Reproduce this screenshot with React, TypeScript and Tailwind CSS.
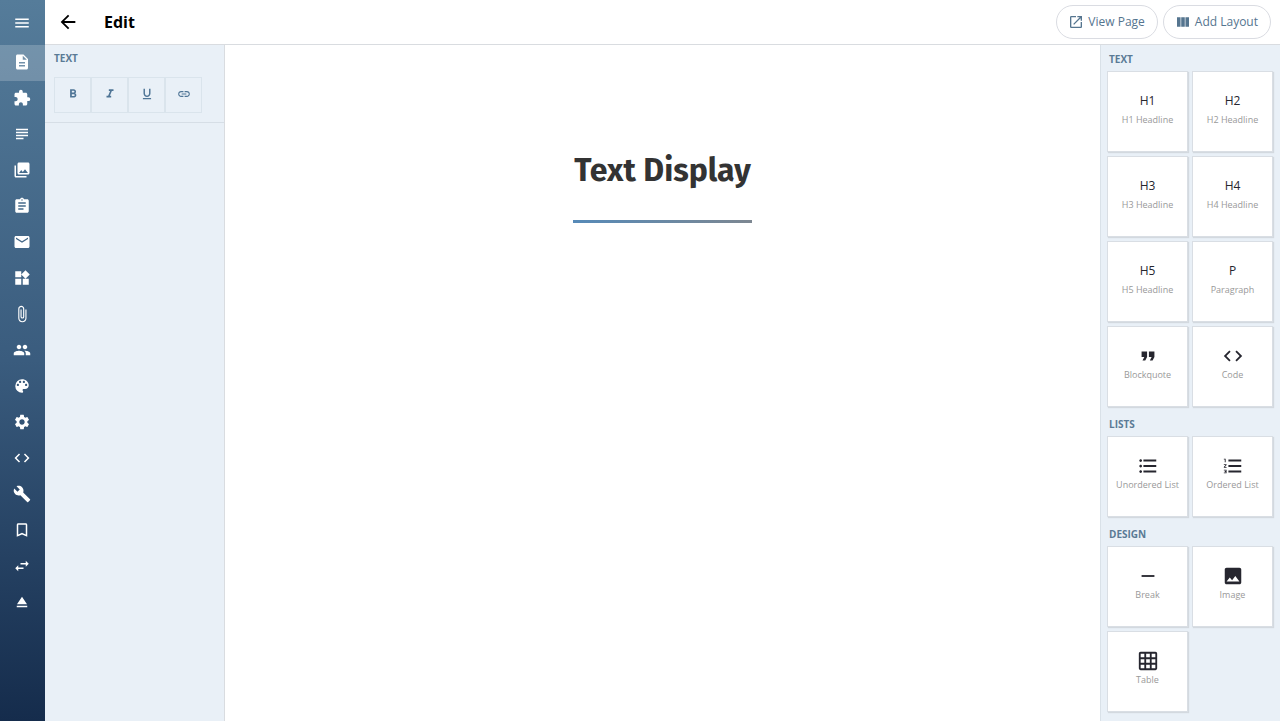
import type { ReactNode } from 'react';
import type { IconType } from 'react-icons';
import {
  MdArrowBack,
  MdAssignment,
  MdAttachFile,
  MdBookmarkBorder,
  MdBuild,
  MdCode,
  MdColorLens,
  MdDescription,
  MdEject,
  MdEmail,
  MdExtension,
  MdFormatBold,
  MdFormatItalic,
  MdFormatListBulleted,
  MdFormatListNumbered,
  MdFormatQuote,
  MdFormatUnderlined,
  MdGridOn,
  MdImage,
  MdLink,
  MdMenu,
  MdOpenInNew,
  MdPeople,
  MdPhotoLibrary,
  MdRemove,
  MdSettings,
  MdSubject,
  MdSwapHoriz,
  MdViewColumn,
  MdWidgets,
} from 'react-icons/md';

interface IconItem {
  label: string;
  icon: IconType;
}

interface Block {
  label: string;
  text?: string;
  icon?: IconType;
}

const navItems: IconItem[] = [
  { label: 'Pages', icon: MdDescription },
  { label: 'Modules', icon: MdExtension },
  { label: 'Posts', icon: MdSubject },
  { label: 'Galleries', icon: MdPhotoLibrary },
  { label: 'Forms', icon: MdAssignment },
  { label: 'Mail', icon: MdEmail },
  { label: 'Widgets', icon: MdWidgets },
  { label: 'Files', icon: MdAttachFile },
  { label: 'Users', icon: MdPeople },
  { label: 'Theme', icon: MdColorLens },
  { label: 'Settings', icon: MdSettings },
  { label: 'Code', icon: MdCode },
  { label: 'Tools', icon: MdBuild },
  { label: 'Bookmarks', icon: MdBookmarkBorder },
  { label: 'Redirects', icon: MdSwapHoriz },
  { label: 'Log out', icon: MdEject },
];

const formatButtons: IconItem[] = [
  { label: 'Bold', icon: MdFormatBold },
  { label: 'Italic', icon: MdFormatItalic },
  { label: 'Underline', icon: MdFormatUnderlined },
  { label: 'Link', icon: MdLink },
];

const blockGroups: { title: string; blocks: Block[] }[] = [
  {
    title: 'TEXT',
    blocks: [
      { label: 'H1 Headline', text: 'H1' },
      { label: 'H2 Headline', text: 'H2' },
      { label: 'H3 Headline', text: 'H3' },
      { label: 'H4 Headline', text: 'H4' },
      { label: 'H5 Headline', text: 'H5' },
      { label: 'Paragraph', text: 'P' },
      { label: 'Blockquote', icon: MdFormatQuote },
      { label: 'Code', icon: MdCode },
    ],
  },
  {
    title: 'LISTS',
    blocks: [
      { label: 'Unordered List', icon: MdFormatListBulleted },
      { label: 'Ordered List', icon: MdFormatListNumbered },
    ],
  },
  {
    title: 'DESIGN',
    blocks: [
      { label: 'Break', icon: MdRemove },
      { label: 'Image', icon: MdImage },
      { label: 'Table', icon: MdGridOn },
    ],
  },
];

function Sidebar() {
  return (
    <nav className="flex w-[45px] shrink-0 flex-col bg-gradient-to-b from-[#557c9a] via-[#3a5c7e] to-[#152c4c] text-white">
      <button type="button" aria-label="Menu" className="flex h-[45px] items-center justify-center pr-px">
        <MdMenu size={18} />
      </button>
      {navItems.map(({ label, icon: Icon }, index) => (
        <a
          key={label}
          href="#"
          aria-label={label}
          className={`flex h-9 items-center justify-center pr-px pb-0.5 ${index === 0 ? 'bg-white/20' : ''}`}
        >
          <Icon size={18} />
        </a>
      ))}
    </nav>
  );
}

function PillButton({ icon: Icon, children }: { icon: IconType; children: ReactNode }) {
  return (
    <button
      type="button"
      className="flex h-[34px] items-center gap-1 rounded-full border border-[#dadce2] pr-3 pl-[11px] text-xs text-[#55758f]"
    >
      <Icon size={16} />
      {children}
    </button>
  );
}

function BlockTile({ block }: { block: Block }) {
  const Icon = block.icon;

  return (
    <button
      type="button"
      className="flex h-[81px] flex-col items-center border border-[#d9dee4] bg-white pt-[17px] shadow-[1px_1px_1px_#d3d9df]"
    >
      <span className="flex h-6 items-center text-xs text-[#26262f]">
        {Icon ? <Icon size={22} /> : block.text}
      </span>
      <span className="text-[9px] leading-[14px] whitespace-nowrap text-[#999999]">{block.label}</span>
    </button>
  );
}

export default function App() {
  return (
    <div className="flex min-h-screen bg-white font-['Open_Sans',sans-serif]">
      <Sidebar />
      <div className="flex min-w-0 flex-1 flex-col">
        <header className="flex h-[45px] items-center border-b border-[#d9dce0] pr-[9px] pl-3">
          <a href="#" aria-label="Back" className="text-black">
            <MdArrowBack size={22} />
          </a>
          <h1 className="ml-[25px] text-base font-bold text-black">Edit</h1>
          <div className="ml-auto flex gap-[5px]">
            <PillButton icon={MdOpenInNew}>View Page</PillButton>
            <PillButton icon={MdViewColumn}>Add Layout</PillButton>
          </div>
        </header>

        <div className="flex flex-1">
          <aside className="w-[180px] shrink-0 border-r border-[#d9dce0] bg-[#e9f0f7]">
            <section className="border-b border-[#d6dee6] px-[9px] pt-[5px] pb-[9px]">
              <h2 className="text-[10px] leading-4 font-bold text-[#5a7a95]">TEXT</h2>
              <div className="mt-[11px] flex">
                {formatButtons.map(({ label, icon: Icon }) => (
                  <button
                    key={label}
                    type="button"
                    aria-label={label}
                    className="flex h-9 w-[37px] items-center justify-center border border-[#dae4ec] pb-0.5 text-[#4f7596]"
                  >
                    <Icon size={14} />
                  </button>
                ))}
              </div>
            </section>
          </aside>

          <main className="flex flex-1 flex-col items-center pt-[100px]">
            <h2 className="border-b-[3px] border-[#6d8ca8] px-px pb-6 font-['Fira_Sans','Noto_Sans',sans-serif] text-[32px] leading-[51px] font-bold text-[#333333] [border-image:linear-gradient(to_right,#568ab8,#7d8791)_1]">
              Text Display
            </h2>
          </main>

          <aside className="flex w-[180px] shrink-0 flex-col gap-[9px] border-l border-[#d9e1e8] bg-[#e9f0f7] px-1.5 pt-1.5 pb-2">
            {blockGroups.map((group) => (
              <section key={group.title}>
                <h2 className="px-0.5 pb-1 text-[10px] leading-4 font-bold text-[#5a7a95]">{group.title}</h2>
                <div className="grid grid-cols-[81px_81px] gap-1">
                  {group.blocks.map((block) => (
                    <BlockTile key={block.label} block={block} />
                  ))}
                </div>
              </section>
            ))}
          </aside>
        </div>
      </div>
    </div>
  );
}
